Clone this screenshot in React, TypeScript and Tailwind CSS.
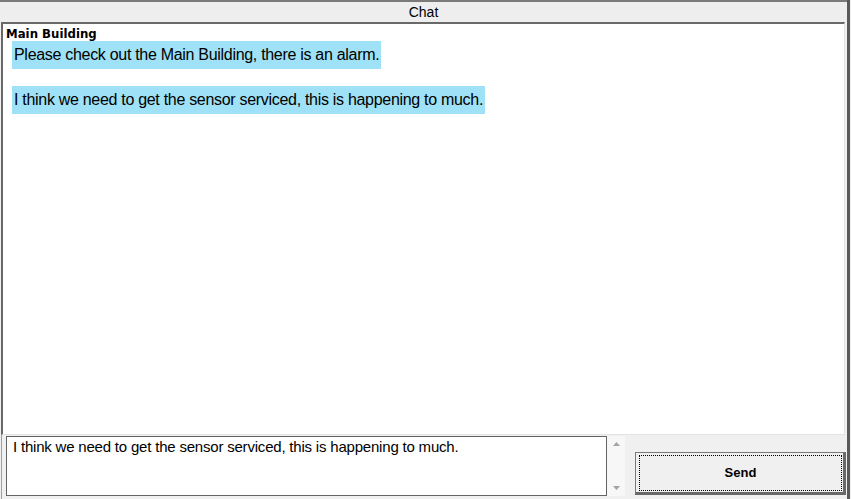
import React from "react";

const messages = [
  "Please check out the Main Building, there is an alarm.",
  "I think we need to get the sensor serviced, this is happening to much.",
];

function ScrollArrow({ up }: { up?: boolean }) {
  return (
    <svg width="7" height="4" viewBox="0 0 7 4">
      <path d={up ? "M3.5 0 L7 4 L0 4 Z" : "M0 0 L7 0 L3.5 4 Z"} fill="#a3a3a3" />
    </svg>
  );
}

export default function App() {
  return (
    <div className="flex h-[499px] w-[851px] overflow-hidden bg-[#f0f0f0] font-['Liberation_Sans',Arial,sans-serif] text-black">
      <div className="flex w-[847px] flex-col">
        {/* title bar */}
        <div className="h-[22px] border-t-2 border-[#7a7a7a] bg-[#eeeeee] text-center text-[14px] leading-[20px]">
          Chat
        </div>

        {/* conversation */}
        <div className="mr-[2px] ml-px h-[413px] border-t-2 border-r border-b border-l-2 border-[#696969] border-r-[#e3e3e3] border-b-[#e3e3e3] bg-white">
          <div className="pt-[3px] pl-[3px] font-['DejaVu_Sans',sans-serif] text-[11.75px] leading-[14px] font-bold">
            Main Building
          </div>
          <div className="flex flex-col items-start gap-[17px] pl-[9px]">
            {messages.map((m, i) => (
              <div
                key={i}
                className="h-[28px] bg-[#9fe1f6] px-[2px] text-[16px] leading-[28px] tracking-[-0.3px] whitespace-nowrap"
              >
                {m}
              </div>
            ))}
          </div>
        </div>

        {/* compose row */}
        <div className="ml-px flex flex-1 items-start border-l border-[#a0a0a0] pt-px pl-[4px]">
          <div className="h-[60px] w-[601px] border border-[#646464] bg-white pt-px pl-[6px] text-[15px] leading-[18px] tracking-[-0.2px]">
            I think we need to get the sensor serviced, this is happening to much.
          </div>
          <div className="flex h-[60px] w-[18px] flex-col items-center justify-between bg-[#f7f7f7] py-[6px]">
            <ScrollArrow up />
            <ScrollArrow />
          </div>
          <button className="mt-[16px] ml-[10px] flex h-[43px] w-[211px] border-t border-r-[3px] border-b-[3px] border-l border-[#7a7a7a] border-r-[#696969] border-b-[#696969] bg-[#f0f0f0] pt-[2px] pr-px pb-px pl-[3px]">
            <span className="flex flex-1 items-center justify-center border border-dotted border-black text-[13px] font-bold">
              Send
            </span>
          </button>
        </div>
      </div>
      <div className="w-[3px] bg-[#5a5a5a]" />
      <div className="w-px" />
    </div>
  );
}
